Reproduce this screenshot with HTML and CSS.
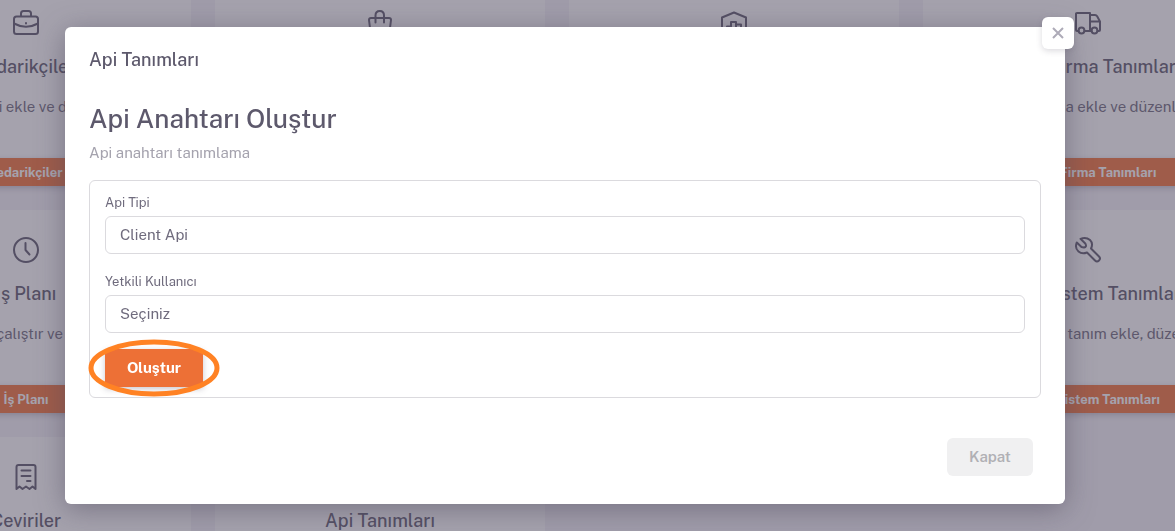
FILE: index.html
```html
<!DOCTYPE html>
<html lang="tr">
<head>
<meta charset="utf-8">
<title>Api Tanımları</title>
<link rel="stylesheet" href="styles.css">
</head>
<body>
<main class="page">
  <div class="cards">
    <section class="card">
      <svg class="card-icon" viewBox="0 0 32 32"><rect x="4" y="9.500" width="24" height="17.500" rx="2.500"/><path d="M11 9V6.500Q11 4 13.500 4H18.500Q21 4 21 6.500V9M4 16.500Q16 23 28 16.500M16 16V16.500"/></svg>
      <h2 class="card-title">Tedarikçiler</h2>
      <p class="card-text">Tedarikçi ekle ve düzenle</p>
      <button class="card-button" type="button">Tedarikçiler</button>
    </section>
    <section class="card">
      <svg class="card-icon" viewBox="0 0 32 32"><path d="M7 11H25Q27 11 27 13L25.500 25Q25 28 22 28H10Q7 28 6.500 25L5 13Q5 11 7 11ZM11.500 15.500V8.500Q11.500 4 15.800 4Q20 4 20 8.500V15.500"/></svg>
    </section>
    <section class="card">
      <svg class="card-icon" viewBox="0 0 32 32"><path d="M4 28V10.500L16 5.500L28 10.500V28M9 28V19.500H13V15H18V17.500H23V28M18 17.500V22"/></svg>
    </section>
    <section class="card">
      <svg class="card-icon" viewBox="0 0 32 32"><path d="M6.500 24H5Q4 24 4 23V6.500Q4 6 5 6H18V24H12.500M18 8H23Q24.500 8 25 9L28 14.500V23Q28 24 27 24H25.500M19.500 24H18M18 14.500H28"/><circle cx="9.500" cy="23.500" r="2.900"/><circle cx="22.500" cy="23.500" r="2.900"/></svg>
      <h2 class="card-title">Kargo Firma Tanımları</h2>
      <p class="card-text">Kargo firma ekle ve düzenle</p>
      <button class="card-button" type="button">Kargo Firma Tanımları</button>
    </section>
    <section class="card">
      <svg class="card-icon" viewBox="0 0 32 32"><circle cx="16" cy="16" r="12"/><path d="M15.500 9V16L19.500 20.500"/></svg>
      <h2 class="card-title">İş Planı</h2>
      <p class="card-text">İş planını çalıştır ve düzenle</p>
      <button class="card-button" type="button">İş Planı</button>
    </section>
    <section class="card"></section>
    <section class="card"></section>
    <section class="card">
      <svg class="card-icon" viewBox="0 0 32 32"><path d="M8.500 4.800L13.500 9.800Q15 13 12 13.500L9.500 13L4.800 8.500Q2.500 14 6.500 17.500Q10 20.500 15 18.500L23 26.500Q25 28.500 27 26.500Q29 24.500 27 22.500L19 14.500Q21.500 9.500 18 6Q14 2.500 8.500 4.800Z"/></svg>
      <h2 class="card-title">Genel Sistem Tanımları</h2>
      <p class="card-text">Sisteme yeni tanım ekle, düzenle</p>
      <button class="card-button" type="button">Genel Sistem Tanımları</button>
    </section>
    <section class="card">
      <svg class="card-icon" viewBox="0 0 32 32"><path d="M6.500 28V6Q6.500 4 8.500 4H23.500Q25.500 4 25.500 6V28L22.500 25.500L19.500 28L16 25.500L12.500 28L9.500 25.500L6.500 28M11.500 9.500H20.500M11.500 15H20.500M17 20H20.500"/></svg>
      <h2 class="card-title">Çeviriler</h2>
    </section>
    <section class="card">
      <div class="card-icon"></div>
      <h2 class="card-title">Api Tanımları</h2>
    </section>
  </div>
</main>

<div class="backdrop">
  <div class="modal" role="dialog" aria-modal="true" aria-labelledby="modal-title">
    <button class="close" type="button" aria-label="Kapat">
      <svg class="close-icon" viewBox="0 0 12 12"><path d="M1 1L11 11M11 1L1 11"/></svg>
    </button>
    <h1 class="modal-title" id="modal-title">Api Tanımları</h1>
    <h2 class="heading">Api Anahtarı Oluştur</h2>
    <p class="subheading">Api anahtarı tanımlama</p>
    <form class="panel">
      <label class="label" for="api-type">Api Tipi</label>
      <select class="field" id="api-type"><option>Client Api</option></select>
      <label class="label" for="api-user">Yetkili Kullanıcı</label>
      <select class="field" id="api-user"><option>Seçiniz</option></select>
      <div class="submit">
        <button class="primary" type="button">Oluştur</button>
        <svg class="marker" viewBox="0 0 132 58"><ellipse cx="66" cy="29" rx="63" ry="26"/></svg>
      </div>
    </form>
    <div class="modal-footer">
      <button class="secondary" type="button">Kapat</button>
    </div>
  </div>
</div>
</body>
</html>
```
FILE: styles.css
```css
* { box-sizing: border-box; }

body {
  margin: 0;
  background: #f5f3f8;
  color: #5d596c;
  font-family: "Public Sans", Inter, "Liberation Sans", sans-serif;
  font-size: 15px;
}

h1, h2, p { margin: 0; font-weight: 400; }
h1, h2 { font-weight: 500; }
button, select { font: inherit; }

.page {
  height: 100vh;
  overflow: hidden;
}

.cards {
  display: grid;
  grid-template-columns: repeat(4, 1fr);
  grid-auto-rows: minmax(203px, auto);
  gap: 24px;
  margin: -17px -78px 0 -139px;
}

.card {
  display: flex;
  flex-direction: column;
  align-items: center;
  padding-top: 24px;
  background: #fff;
  text-align: center;
}

.card-icon {
  width: 32px;
  height: 32px;
  fill: none;
  stroke: #5d596c;
  stroke-width: 2;
  stroke-linecap: round;
  stroke-linejoin: round;
}

.card-title {
  margin-top: 16px;
  font-size: 18px;
  line-height: 24px;
}

.card-text {
  margin-top: 16px;
  color: #6f6b7d;
  line-height: 24px;
}

.card-button {
  width: 100%;
  height: 28px;
  margin-top: auto;
  padding: 0;
  border: 0;
  background: #f27238;
  box-shadow: 0 2px 6px rgba(75, 70, 92, 0.3);
  color: #fff;
  font-size: 13px;
  font-weight: 700;
}

.backdrop {
  position: fixed;
  inset: 0;
  padding: 27px 110px 27px 65px;
  background: rgba(75, 70, 92, 0.5);
}

.modal {
  position: relative;
  padding: 20px 24px 28px;
  border-radius: 6px;
  background: #fff;
  box-shadow: 0 5px 28px rgba(75, 70, 92, 0.5);
}

.close {
  position: absolute;
  top: -10px;
  right: -9px;
  display: grid;
  place-items: center;
  width: 32px;
  height: 32px;
  padding: 0;
  border: 0;
  border-radius: 6px;
  background: #fff;
  box-shadow: 0 2px 6px rgba(75, 70, 92, 0.2);
}

.close-icon {
  width: 12px;
  height: 12px;
  fill: none;
  stroke: #aeabb8;
  stroke-width: 2;
}

.modal-title {
  font-size: 18px;
  line-height: 26px;
}

.heading {
  margin-top: 28px;
  font-size: 26px;
  line-height: 36px;
}

.subheading {
  margin-top: 4px;
  color: #a5a3ae;
  line-height: 24px;
}

.panel {
  display: flex;
  flex-direction: column;
  margin-top: 15px;
  padding: 12px 15px 10px;
  border: 1px solid #dbdade;
  border-radius: 6px;
}

.label {
  margin-bottom: 3px;
  color: #6f6b7d;
  font-size: 13px;
  line-height: 20px;
}

.field {
  width: 100%;
  height: 38px;
  margin-bottom: 18px;
  padding: 0 14px 2px;
  border: 1px solid #dbdade;
  border-radius: 6px;
  appearance: none;
  background: #fff;
  color: #6f6b7d;
}

.submit {
  position: relative;
  align-self: flex-start;
  margin-top: -2px;
}

.primary {
  display: block;
  width: 98px;
  height: 38px;
  padding: 0 0 2px;
  border: 0;
  background: #ed7036;
  box-shadow: 0 2px 6px rgba(75, 70, 92, 0.3);
  color: #fff;
  font-weight: 700;
}

.marker {
  position: absolute;
  top: -10px;
  left: -17px;
  width: 132px;
  height: 58px;
  fill: none;
  stroke: #ff8224;
  stroke-width: 5;
}

.modal-footer {
  display: flex;
  justify-content: flex-end;
  margin-top: 40px;
  padding-right: 8px;
}

.secondary {
  width: 86px;
  height: 38px;
  padding: 0 0 2px;
  border: 0;
  border-radius: 6px;
  background: #f0f0f1;
  color: #b1b0b5;
  font-weight: 600;
}
```
